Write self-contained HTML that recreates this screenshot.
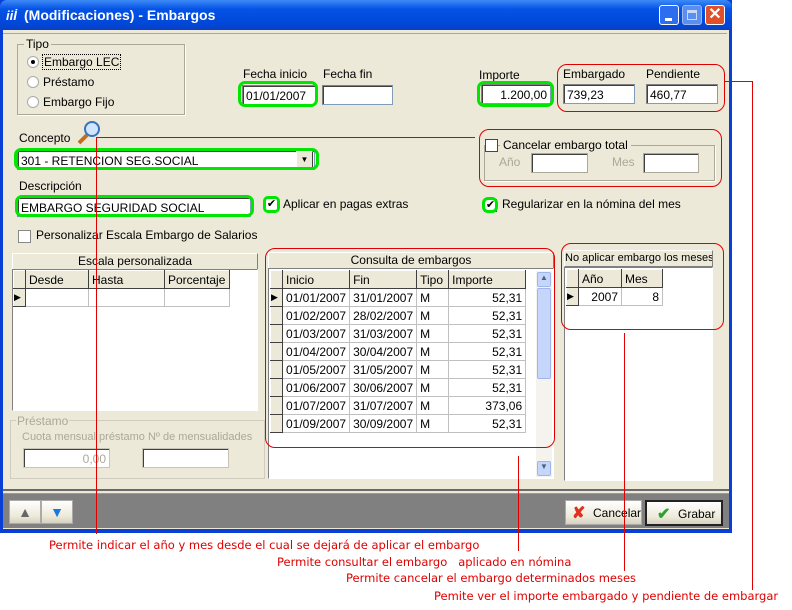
<!DOCTYPE html>
<html><head><meta charset="utf-8"><style>
*{margin:0;padding:0;box-sizing:border-box}
body{width:792px;height:610px;background:#fff;position:relative;overflow:hidden;font-family:"Liberation Sans",Arial,sans-serif;font-size:11px;color:#000}
.a{position:absolute}
.win{left:0;top:0;width:732px;height:533px;background:#0a3fd6;}
.title{left:0;top:0;width:732px;height:30px;background:linear-gradient(#3d8af7,#0553e6 30%,#0047d8 80%,#0a3fbf);border-radius:7px 7px 0 0}
.body{left:3px;top:30px;width:726px;height:499px;background:#ece9d8}
.in{background:#fff;border:1px solid #7f9db9;border-top-color:#808080;border-left-color:#808080;box-shadow:inset 1px 1px 0 #404040;height:20px;padding:3px 3px;font-size:12px;white-space:nowrap;overflow:hidden}
.g{border:3px solid #00e600;border-radius:7px}
.r{border:1px solid #e00000;border-radius:10px}
.lbl{font-size:12px;white-space:nowrap}
.grid{border-collapse:collapse;font-size:12px;background:#fff;table-layout:fixed}
.grid td{border:1px solid #c0c0c0;height:18px;padding:0 3px;white-space:nowrap;overflow:hidden}
.grid th{background:#ece9d8;border:1px solid #fff;border-right-color:#404040;border-bottom-color:#404040;font-weight:normal;text-align:left;height:18px;padding:0 3px;font-size:12px;white-space:nowrap}
.rh{background:#ece9d8 !important;border:1px solid #fff !important;border-right-color:#404040 !important;border-bottom-color:#404040 !important;width:12px;padding:0 !important}
.hdr{background:#ece9d8;border:1px solid #fff;border-right-color:#808080;border-bottom-color:#808080;text-align:center;font-size:12px;height:17px;line-height:15px;white-space:nowrap;overflow:hidden}
.panel{border:1px solid #fff;border-left-color:#808080;border-top-color:#808080;background:#fff}
.red{color:#e00000;font-family:"DejaVu Sans",sans-serif;font-size:11.5px;white-space:nowrap}
.rl{background:#e00000}
.cb{width:13px;height:13px;border:1px solid #1c5180;background:#fff}
.btn{background:linear-gradient(#fff,#ece9d8 70%,#d6d0c0);border:1px solid #003c74;border-radius:3px;font-size:12px}
.dis{color:#aca899}
</style></head><body>
<div class="a win"></div>
<div class="a title"></div>
<div class="a" style="left:6px;top:8px;color:#fff;font-weight:bold;font-style:italic;font-size:13px">iiİ</div>
<div class="a" style="left:24px;top:7px;color:#fff;font-weight:bold;font-size:14px">(Modificaciones) - Embargos</div>
<div class="a" style="left:659px;top:5px;width:20px;height:20px;border:1px solid #fff;border-radius:3px;background:#2d6ef0"><div class="a" style="left:5px;top:12px;width:7px;height:3px;background:#fff"></div></div>
<div class="a" style="left:682px;top:5px;width:20px;height:20px;border:1px solid #9bb8f0;border-radius:3px;background:#5a8ef0"><div class="a" style="left:4px;top:4px;width:10px;height:10px;border:1px solid #c8d8f8;border-top-width:3px"></div></div>
<div class="a" style="left:705px;top:5px;width:20px;height:20px;border:1px solid #fff;border-radius:3px;background:#e0502a;color:#fff;font-weight:bold;font-size:16px;text-align:center;line-height:18px">✕</div>
<div class="a body"></div>
<div class="a" style="left:3px;top:33px;width:724px;height:1px;background:#aca899"></div>

<!-- Tipo -->
<div class="a" style="left:17px;top:44px;width:168px;height:71px;border:1px solid #aca899;box-shadow:1px 1px 0 #fff"></div>
<div class="a lbl" style="left:24px;top:37px;background:#ece9d8;padding:0 2px">Tipo</div>
<div class="a" style="left:27px;top:56px;width:12px;height:12px;border-radius:50%;background:#fff;border:1px solid #aaa"><div class="a" style="left:3px;top:3px;width:4px;height:4px;border-radius:50%;background:#000"></div></div>
<div class="a lbl" style="left:42px;top:54px;border:1px dotted #000;padding:0 1px">Embargo LEC</div>
<div class="a" style="left:27px;top:76px;width:12px;height:12px;border-radius:50%;background:#fff;border:1px solid #aaa"></div>
<div class="a lbl" style="left:43px;top:75px">Préstamo</div>
<div class="a" style="left:27px;top:96px;width:12px;height:12px;border-radius:50%;background:#fff;border:1px solid #aaa"></div>
<div class="a lbl" style="left:43px;top:95px">Embargo Fijo</div>

<div class="a lbl" style="left:243px;top:67px">Fecha inicio</div>
<div class="a lbl" style="left:323px;top:67px">Fecha fin</div>
<div class="a in" style="left:242px;top:85px;width:74px">01/01/2007</div>
<div class="a g" style="left:238px;top:81px;width:80px;height:26px"></div>
<div class="a in" style="left:322px;top:85px;width:71px"></div>
<div class="a lbl" style="left:479px;top:68px">Importe</div>
<div class="a in" style="left:481px;top:84px;width:70px;text-align:right">1.200,00</div>
<div class="a g" style="left:477px;top:81px;width:77px;height:26px"></div>
<div class="a lbl" style="left:563px;top:67px">Embargado</div>
<div class="a lbl" style="left:646px;top:67px">Pendiente</div>
<div class="a in" style="left:563px;top:84px;width:72px">739,23</div>
<div class="a in" style="left:646px;top:84px;width:72px">460,77</div>
<div class="a r" style="left:557px;top:64px;width:168px;height:48px"></div>

<div class="a lbl" style="left:19px;top:131px">Concepto</div>
<svg class="a" style="left:76px;top:120px" width="26" height="26"><line x1="3" y1="23" x2="11" y2="15" stroke="#c07020" stroke-width="4"/><circle cx="16" cy="9" r="7" fill="#cfe6fb" stroke="#3a72c0" stroke-width="2"/></svg>
<div class="a in" style="left:17px;top:150px;width:298px">301 - RETENCION SEG.SOCIAL</div>
<div class="a" style="left:296px;top:151px;width:17px;height:17px;background:#ece9d8;border:1px solid #fff;border-right-color:#404040;border-bottom-color:#404040;font-size:8px;text-align:center;line-height:15px">▼</div>
<div class="a g" style="left:14px;top:148px;width:305px;height:22px"></div>

<div class="a r" style="left:479px;top:129px;width:243px;height:58px"></div>
<div class="a" style="left:484px;top:145px;width:231px;height:36px;border:1px solid #aca899;box-shadow:1px 1px 0 #fff"></div>
<div class="a cb" style="left:485px;top:139px"></div>
<div class="a lbl" style="left:500px;top:138px;background:#ece9d8;padding:0 3px">Cancelar embargo total</div>
<div class="a lbl dis" style="left:499px;top:155px">Año</div>
<div class="a in" style="left:531px;top:153px;width:57px;border-color:#aca899"></div>
<div class="a lbl dis" style="left:612px;top:155px">Mes</div>
<div class="a in" style="left:643px;top:153px;width:56px;border-color:#aca899"></div>

<div class="a lbl" style="left:19px;top:179px">Descripción</div>
<div class="a in" style="left:17px;top:197px;width:234px">EMBARGO SEGURIDAD SOCIAL</div>
<div class="a g" style="left:15px;top:195px;width:239px;height:22px"></div>
<div class="a cb" style="left:265px;top:198px;font-size:11px;line-height:11px;text-align:center">✔</div>
<div class="a g" style="left:263px;top:196px;width:17px;height:17px;border-radius:5px"></div>
<div class="a lbl" style="left:283px;top:197px">Aplicar en pagas extras</div>
<div class="a cb" style="left:484px;top:199px;font-size:11px;line-height:11px;text-align:center">✔</div>
<div class="a g" style="left:482px;top:197px;width:16px;height:16px;border-radius:6px"></div>
<div class="a lbl" style="left:502px;top:197px">Regularizar en la nómina del mes</div>
<div class="a cb" style="left:18px;top:230px;border-color:#888"></div>
<div class="a lbl" style="left:36px;top:228px">Personalizar Escala Embargo de Salarios</div>

<!-- Escala -->
<div class="a hdr" style="left:12px;top:253px;width:246px">Escala personalizada</div>
<div class="a panel" style="left:12px;top:269px;width:246px;height:142px"></div>
<table class="a grid" style="left:13px;top:270px">
<tr><th class="rh"></th><th style="width:63px">Desde</th><th style="width:76px">Hasta</th><th style="width:65px">Porcentaje</th></tr>
<tr><td class="rh" style="font-size:9px">▶</td><td></td><td></td><td></td></tr></table>
<div class="a" style="left:10px;top:420px;width:255px;height:59px;border:1px solid #d0ccc0"></div>
<div class="a lbl dis" style="left:16px;top:414px;background:#ece9d8;padding:0 1px">Préstamo</div>
<div class="a lbl dis" style="left:22px;top:431px;font-size:11px">Cuota mensual préstamo Nº de mensualidades</div>
<div class="a in dis" style="left:23px;top:448px;width:87px;text-align:right;border-color:#c8c4b8">0,00</div>
<div class="a in" style="left:142px;top:448px;width:87px;border-color:#c8c4b8"></div>

<!-- Consulta -->
<div class="a hdr" style="left:268px;top:252px;width:286px">Consulta de embargos</div>
<div class="a panel" style="left:268px;top:268px;width:286px;height:211px"></div>
<table class="a grid" style="left:270px;top:270px">
<tr><th class="rh"></th><th style="width:67px">Inicio</th><th style="width:67px">Fin</th><th style="width:32px">Tipo</th><th style="width:77px">Importe</th></tr>
<tr><td class="rh" style="font-size:9px">▶</td><td>01/01/2007</td><td>31/01/2007</td><td>M</td><td align="right">52,31</td></tr>
<tr><td class="rh"></td><td>01/02/2007</td><td>28/02/2007</td><td>M</td><td align="right">52,31</td></tr>
<tr><td class="rh"></td><td>01/03/2007</td><td>31/03/2007</td><td>M</td><td align="right">52,31</td></tr>
<tr><td class="rh"></td><td>01/04/2007</td><td>30/04/2007</td><td>M</td><td align="right">52,31</td></tr>
<tr><td class="rh"></td><td>01/05/2007</td><td>31/05/2007</td><td>M</td><td align="right">52,31</td></tr>
<tr><td class="rh"></td><td>01/06/2007</td><td>30/06/2007</td><td>M</td><td align="right">52,31</td></tr>
<tr><td class="rh"></td><td>01/07/2007</td><td>31/07/2007</td><td>M</td><td align="right">373,06</td></tr>
<tr><td class="rh"></td><td>01/09/2007</td><td>30/09/2007</td><td>M</td><td align="right">52,31</td></tr></table>
<div class="a" style="left:536px;top:271px;width:16px;height:206px;background:#f4f3ee"></div>
<div class="a" style="left:537px;top:272px;width:14px;height:15px;background:#c6d6fb;border:1px solid #9eb6ec;border-radius:2px;font-size:8px;text-align:center;color:#4d6185">▲</div>
<div class="a" style="left:537px;top:288px;width:14px;height:91px;background:#c6d6fb;border:1px solid #9eb6ec;border-radius:2px"></div>
<div class="a" style="left:537px;top:461px;width:14px;height:15px;background:#c6d6fb;border:1px solid #9eb6ec;border-radius:2px;font-size:8px;text-align:center;color:#4d6185">▼</div>
<div class="a r" style="left:265px;top:248px;width:290px;height:200px"></div>

<!-- No aplicar -->
<div class="a hdr" style="left:564px;top:250px;width:149px;font-size:11px">No aplicar embargo los meses</div>
<div class="a panel" style="left:564px;top:267px;width:149px;height:214px"></div>
<table class="a grid" style="left:566px;top:269px">
<tr><th class="rh"></th><th style="width:43px">Año</th><th style="width:41px">Mes</th></tr>
<tr><td class="rh" style="font-size:9px">▶</td><td align="right">2007</td><td align="right">8</td></tr></table>
<div class="a r" style="left:561px;top:243px;width:163px;height:87px"></div>

<!-- bottom bar -->
<div class="a" style="left:3px;top:489px;width:726px;height:2px;background:#6a6a6a"></div>
<div class="a" style="left:3px;top:493px;width:726px;height:35px;background:#808080;border-top:1px solid #9a9a9a"></div>
<div class="a btn" style="left:9px;top:500px;width:32px;height:24px;border-color:#aaa;border-radius:0;text-align:center;color:#666;font-size:14px;line-height:22px">▲</div>
<div class="a btn" style="left:41px;top:500px;width:32px;height:24px;border-color:#aaa;border-radius:0;text-align:center;color:#1a78e0;font-size:14px;line-height:22px">▼</div>
<div class="a btn" style="left:565px;top:500px;width:77px;height:25px;border-color:#aaa;border-radius:0"><span class="a" style="left:6px;top:2px;color:#e03020;font-size:16px;font-weight:bold">✘</span><span class="a" style="left:27px;top:5px">Cancelar</span></div>
<div class="a btn" style="left:645px;top:500px;width:78px;height:26px;border:2px solid #222;border-radius:0"><span class="a" style="left:10px;top:2px;color:#30a030;font-size:16px;font-weight:bold">✔</span><span class="a" style="left:31px;top:5px">Grabar</span></div>

<!-- red annotation lines -->
<div class="a rl" style="left:96px;top:137px;width:379px;height:1px"></div>
<div class="a rl" style="left:96px;top:137px;width:1px;height:397px"></div>
<div class="a rl" style="left:518px;top:456px;width:1px;height:95px"></div>
<div class="a rl" style="left:624px;top:333px;width:1px;height:238px"></div>
<div class="a rl" style="left:724px;top:81px;width:29px;height:1px"></div>
<div class="a rl" style="left:752px;top:81px;width:1px;height:509px"></div>
<div class="a red" style="left:49px;top:538px">Permite indicar el año y mes desde el cual se dejará de aplicar el embargo</div>
<div class="a red" style="left:277px;top:555px">Permite consultar el embargo &nbsp; aplicado en nómina</div>
<div class="a red" style="left:346px;top:571px">Permite cancelar el embargo determinados meses</div>
<div class="a red" style="left:434px;top:589px">Pemite ver el importe embargado y pendiente de embargar</div>
</body></html>
